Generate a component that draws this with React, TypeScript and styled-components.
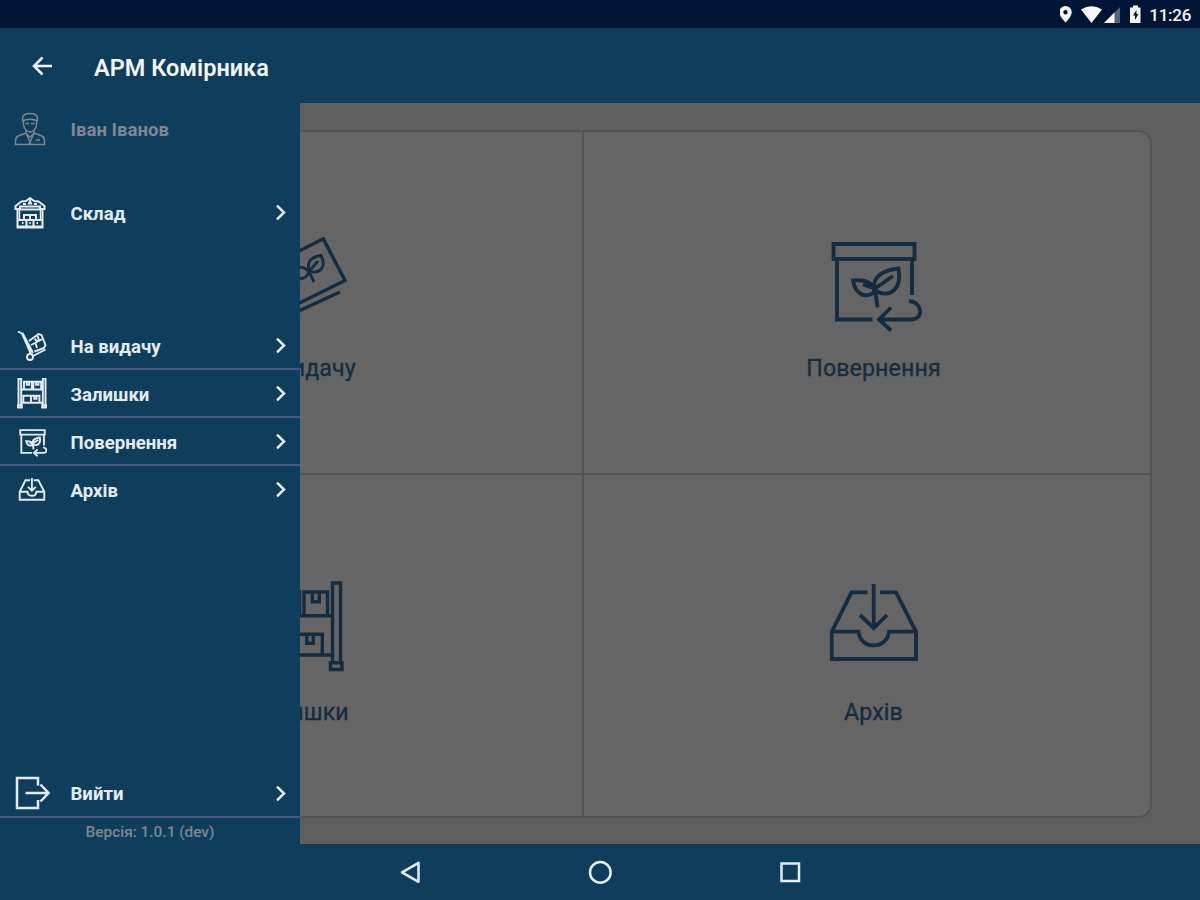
import React from "react";
import styled, { createGlobalStyle } from "styled-components";

const GlobalStyle = createGlobalStyle`
  * { box-sizing: border-box; }
  body { margin: 0; font-family: Roboto, "Liberation Sans", sans-serif; background: #0f3e5c; }
`;

const Screen = styled.div`
  width: 1200px;
  height: 900px;
  display: flex;
  flex-direction: column;
  overflow: hidden;
  background: #0f3e5c;
`;

const StatusBar = styled.div`
  height: 28px;
  display: flex;
  align-items: center;
  justify-content: flex-end;
  padding-right: 9px;
  background: #001536;
  color: #f4f6fa;
`;

const Clock = styled.span`
  margin-left: 7px;
  padding-top: 2px;
  font-size: 17px;
  line-height: 20px;
  font-weight: 500;
  letter-spacing: -0.3px;
`;

const Header = styled.header`
  height: 75px;
  display: flex;
  align-items: center;
  padding-left: 30px;
  color: #f2f6fa;
`;

const Title = styled.h1`
  margin: 4px 0 0 40px;
  font-size: 23.5px;
  line-height: 30px;
  font-weight: 600;
`;

const Body = styled.main`
  position: relative;
  height: 741px;
  padding: 27px 48px 0 16px;
  background: #5e5e5e;
`;

const Grid = styled.div`
  height: 688px;
  display: grid;
  grid-template-columns: 566px 1fr;
  grid-template-rows: 343px 1fr;
  border: 2px solid #545454;
  border-radius: 14px;
  background: #656565;
`;

const Cell = styled.section<{ $right?: boolean; $top?: boolean }>`
  display: flex;
  flex-direction: column;
  align-items: center;
  padding-top: ${(p) => (p.$top ? 105 : 106)}px;
  padding-left: ${(p) => (p.$right ? "13px" : "0")};
  padding-right: ${(p) => (p.$right ? "0" : "1px")};
  border-right: ${(p) => (p.$right ? "0" : "2px solid #545454")};
  border-bottom: ${(p) => (p.$top ? "2px solid #545454" : "0")};
  color: #132c40;
`;

const CellLabel = styled.div`
  margin-top: 21px;
  font-size: 23.2px;
  line-height: 28px;
  letter-spacing: 0.1px;
  white-space: nowrap;
  -webkit-text-stroke: 0.3px currentColor;
`;

const Drawer = styled.aside`
  position: absolute;
  left: 0;
  top: 0;
  width: 300px;
  height: 741px;
  display: flex;
  flex-direction: column;
  background: #0f3e5c;
`;

const Row = styled.div<{ $line?: boolean; $muted?: boolean; $before?: number }>`
  flex: none;
  height: ${(p) => (p.$muted ? 54 : 48)}px;
  margin-top: ${(p) => p.$before ?? 0}px;
  display: flex;
  align-items: center;
  padding-right: 12px;
  border-bottom: 2px solid ${(p) => (p.$line ? "#4c5786" : "transparent")};
  color: ${(p) => (p.$muted ? "#7c8790" : "#e6ecf3")};
`;

const IconSlot = styled.div<{ $inset: number; $drop?: number }>`
  width: 70.5px;
  padding-left: ${(p) => p.$inset}px;
  padding-top: ${(p) => p.$drop ?? 0}px;
  display: flex;
  align-items: center;
`;

const RowLabel = styled.div<{ $drop?: number }>`
  flex: 1;
  padding-top: ${(p) => p.$drop ?? 3}px;
  font-size: 18.6px;
  line-height: 24px;
  font-weight: 700;
  white-space: nowrap;
`;

const Gap = styled.div`
  flex: 0 0 85px;
`;

const Spacer = styled.div`
  flex: 1;
`;

const Version = styled.div`
  height: 26px;
  padding-top: 2px;
  text-align: center;
  font-size: 15.4px;
  line-height: 24px;
  font-weight: 500;
  color: #7c8790;
`;

const NavBar = styled.nav`
  height: 56px;
  display: flex;
  justify-content: center;
  align-items: center;
  gap: 166px;
  color: #e6ecf3;
`;

const Line = styled.svg`
  display: block;
  flex: none;
  fill: none;
  stroke: currentColor;
`;

type IconProps = { size: number; weight: number };

const ReturnIcon = ({ size, weight }: IconProps) => (
  <Line width={size} height={size} viewBox="0 0 96 96" strokeWidth={weight}>
    <path d="M7.5 7H88.5V22H7.5ZM11 22V82.5H46.5M86 22V58" />
    <path d="M83 64C97 65 98 82.5 85 82.5H53M65 70.5L53 82.5L65 93.5" />
    <path d="M49 52C43 42 34 43 27 43.5C29 57 39 62 49 55ZM37 47.5L49 51.5M48 53C46 38 59 33 72.5 31.5C76 50 66 63 48 53ZM67 39L49 51.5M49 52L51.5 70.5" />
  </Line>
);

const ArchiveIcon = ({ size, weight }: IconProps) => (
  <Line width={size} height={size} viewBox="0 0 96 96" strokeWidth={weight}>
    <path d="M41.5 11.3H25.5L5.8 50.7V78H90V50.7L70 11.3H54" />
    <path d="M5.8 50.7H32.5C34 69 61 69 63 50.7H90" />
    <path d="M47.7 3V47M34 34L47.7 47L61 34" />
  </Line>
);

const RackIcon = ({ size, weight }: IconProps) => (
  <Line width={size} height={size} viewBox="0 0 96 96" strokeWidth={weight}>
    <path d="M80.5 2H88.5V81.7H80.5ZM78.5 81.7H90V88.5H78.5ZM7.5 2H15.5V81.7H7.5ZM6 81.7H17.5V88.5H6Z" />
    <path d="M15.5 34.7H80.5M15.5 74H80.5" />
    <path d="M52 34.7V11H75.5V34.7M60.3 11V20.7H67.3V11M24 34.7V11H47.5V34.7M32.3 11V20.7H39.3V11" />
    <path d="M45 74V53.3H70.3V74M54.7 53.3V62.3H61.3V53.3M22 74V53.3H45" />
  </Line>
);

const CardsIcon = () => (
  <Line width="96" height="96" viewBox="0 0 96 96" strokeWidth="3.4">
    <path d="M71.3 1.8L93 43.5L49 65.3L20 80L0 38Z" />
    <path d="M88 55L49 73L24 86" />
    <path d="M57.5 34.5C54 25 59 20 69 18.5C75 30 68 37 57.5 34.5ZM66 24L57 34.5M57 35C49 26 43 32 38 38C45 44 54 43 57 35ZM57 35L62 45" strokeWidth="2.8" />
  </Line>
);

const UserIcon = () => (
  <Line width="32" height="34" viewBox="0 0 32 34" strokeWidth="1.5">
    <path d="M8.5 9V6Q9 1.5 16 1.5Q23 1.5 23.5 6V9M8 9Q16 5.5 24 9M9.5 9V13Q10.5 19 16 20Q21.5 19 22.5 13V9" />
    <path d="M11.5 11.5H15M17 11.5H20.5M12 18V21.5L16 25L20 21.5V18" />
    <path d="M12 21L4 24Q1.5 25.5 1.5 29V32.5H30.5V29Q30.5 25.5 28 24L20 21M12 21L17 32.5M20 21L15 32.5M22 28H26" />
  </Line>
);

const WarehouseIcon = () => (
  <Line width="32" height="32" viewBox="0 0 32 32" strokeWidth="2">
    <path d="M1.5 9L7.5 4.5L12 4L16 1L20 4L24.5 4.5L30.5 9V12H26V9.5H6V12H1.5ZM3.5 12V30.5H28.5V12M6 12.5H26" />
    <path d="M16 4L17 6.5H15ZM9 7H12M20 7H23" />
    <path d="M10 22V18H22V22M16 18V22M4 23H28M4 29.5H28M12.5 23V29M19.5 23V29M8 26H9.5M15.2 26H16.8M22.5 26H24" />
    <path d="M5.5 12V23M26.5 12V23" strokeWidth="1.4" />
  </Line>
);

const TrolleyIcon = () => (
  <Line width="32" height="32" viewBox="0 0 32 32" strokeWidth="1.9">
    <path d="M1 1.5L5 3.5L14 24M5.5 3L16 23" />
    <circle cx="13" cy="27" r="3" />
    <path d="M16 26L28.5 19.5M12 11L21.5 4L24.5 5L28.5 15L27 18L17.5 21.5M14 15L25.5 9M18 8.5L19.5 11.5L22 10L20.5 6M20 18L18.5 13" />
  </Line>
);

const ExitIcon = () => (
  <Line width="36" height="34" viewBox="0 0 36 34" strokeWidth="2.5">
    <path d="M24 9.5V2H3V32H24V24M11.5 17H34M26.5 8.5L34.5 17L26.5 25.5" />
  </Line>
);

const Chevron = () => (
  <Line width="14" height="18" viewBox="0 0 14 18" strokeWidth="2.5">
    <path d="M3 2.7L10 9.5L3 16.3" />
  </Line>
);

const menu = [
  { label: "На видачу", icon: <TrolleyIcon />, line: true, inset: 17, drop: 1 },
  { label: "Залишки", icon: <RackIcon size={32} weight={5.8} />, line: true, inset: 16, drop: 2 },
  { label: "Повернення", icon: <ReturnIcon size={29} weight={6.2} />, line: true, inset: 18, drop: 2 },
  { label: "Архів", icon: <ArchiveIcon size={28} weight={6.4} />, line: false, inset: 18, drop: 4 },
];

export default function App() {
  return (
    <>
      <GlobalStyle />
      <Screen>
        <StatusBar>
          <svg width="82" height="28" viewBox="0 0 82 28" fill="currentColor">
            <path fillRule="evenodd" d="M5.5 6a6.2 6.2 0 0 1 6.2 6.2C11.7 16.5 5.5 22.5 5.5 22.5S-.7 16.5-.7 12.2A6.2 6.2 0 0 1 5.5 6ZM5.5 10a2.2 2.2 0 1 0 0 4.4 2.2 2.2 0 0 0 0-4.4Z" />
            <path d="M21 9.5Q31.5 3 42 9.5L31.5 23Z" />
            <path d="M60 7V23H44Z" opacity=".35" />
            <path d="M54.5 12.5V23H44Z" />
            <path fillRule="evenodd" d="M73 5.5h5v2h2.5V23H70V7.5h3ZM76.500 10L73 15.5h2v4.5L78.500 14h-2Z" />
          </svg>
          <Clock>11:26</Clock>
        </StatusBar>
        <Header>
          <Line width="24" height="24" viewBox="0 0 24 24" strokeWidth="2.5">
            <path d="M22 12H4M12.5 3.5L4 12L12.5 20.5" />
          </Line>
          <Title>АРМ Комірника</Title>
        </Header>
        <Body>
          <Grid>
            <Cell $top>
              <CardsIcon />
              <CellLabel>На видачу</CellLabel>
            </Cell>
            <Cell $top $right>
              <ReturnIcon size={96} weight={3.8} />
              <CellLabel>Повернення</CellLabel>
            </Cell>
            <Cell>
              <RackIcon size={96} weight={3.4} />
              <CellLabel>Залишки</CellLabel>
            </Cell>
            <Cell $right>
              <ArchiveIcon size={96} weight={3.8} />
              <CellLabel>Архів</CellLabel>
            </Cell>
          </Grid>
          <Drawer>
            <Row $muted>
              <IconSlot $inset={14}><UserIcon /></IconSlot>
              <RowLabel $drop={2}>Іван Іванов</RowLabel>
            </Row>
            <Row $before={32}>
              <IconSlot $inset={14} $drop={2}><WarehouseIcon /></IconSlot>
              <RowLabel>Склад</RowLabel>
              <Chevron />
            </Row>
            <Gap />
            {menu.map((m) => (
              <Row key={m.label} $line={m.line}>
                <IconSlot $inset={m.inset} $drop={m.drop}>{m.icon}</IconSlot>
                <RowLabel>{m.label}</RowLabel>
                <Chevron />
              </Row>
            ))}
            <Spacer />
            <Row $line>
              <IconSlot $inset={14}><ExitIcon /></IconSlot>
              <RowLabel $drop={1}>Вийти</RowLabel>
              <Chevron />
            </Row>
            <Version>Версія: 1.0.1 (dev)</Version>
          </Drawer>
        </Body>
        <NavBar>
          <Line width="24" height="24" viewBox="0 0 24 24" strokeWidth="2.5">
            <path d="M20.5 2.8V21.8L4 12.3Z" strokeLinejoin="round" />
          </Line>
          <Line width="24" height="24" viewBox="0 0 24 24" strokeWidth="2.5">
            <circle cx="12.3" cy="12.4" r="10.3" />
          </Line>
          <Line width="24" height="24" viewBox="0 0 24 24" strokeWidth="2.5">
            <rect x="3.5" y="3.5" width="17.5" height="17.5" />
          </Line>
        </NavBar>
      </Screen>
    </>
  );
}
